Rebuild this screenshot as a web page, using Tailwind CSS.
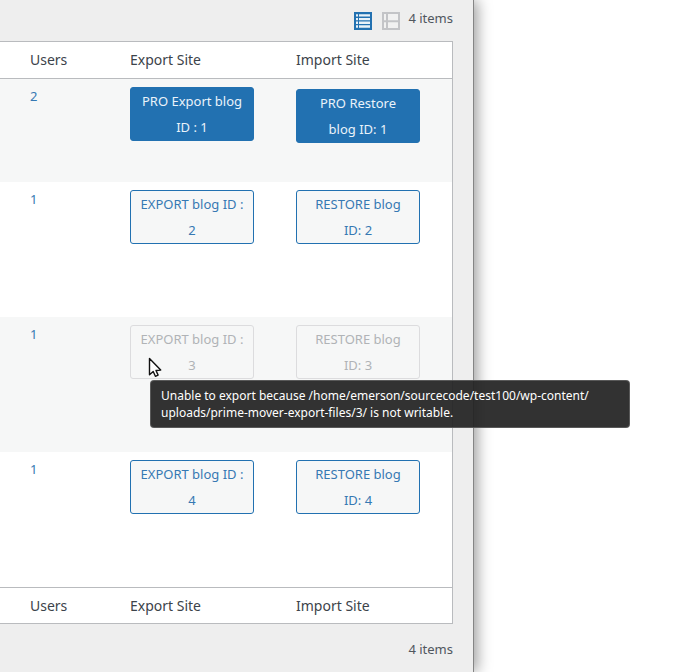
<!DOCTYPE html>
<html lang="en">
<head>
<meta charset="utf-8">
<meta name="viewport" content="width=device-width, initial-scale=1">
<title>Sites</title>
<script src="https://cdn.jsdelivr.net/npm/@tailwindcss/browser@4"></script>
</head>
<body class="flex min-h-screen bg-white pr-[213px] font-['Noto_Sans',sans-serif] text-[13px] text-[#50575e]">
<main class="min-w-0 flex-1 border-r border-[#858585] bg-[#eeeeee] pr-5 shadow-[3px_0_14px_rgba(0,0,0,0.4)]">
  <div class="flex h-[41px] justify-end">
    <div class="mt-3 flex gap-[10px]">
      <button type="button" aria-label="List view" class="h-[18px] w-[18px]">
        <svg class="block" width="18" height="18" viewBox="0 0 18 18"><path fill="#2271b1" d="M0 0h18v18H0z"/><path fill="#e9f2f8" d="M2 2.200h2v2.400H2zM5 2.200h11v2.400H5zM2 5.900h2v2.400H2zM5 5.900h11v2.400H5zM2 9.600h2v2.400H2zM5 9.600h11v2.400H5zM2 13.300h2v2.400H2zM5 13.300h11v2.400H5z"/></svg>
      </button>
      <button type="button" aria-label="Excerpt view" class="h-[18px] w-[18px]">
        <svg class="block" width="18" height="18" viewBox="0 0 18 18"><path fill="#c3c4c7" d="M0 0h18v18H0z"/><path fill="#f1f1f1" d="M2 2h2v6.300H2zM6 2h10v6.300H6zM2 10.300h2V16H2zM6 10.300h10V16H6z"/></svg>
      </button>
    </div>
    <span class="ml-2 mt-2 leading-5">4 items</span>
  </div>
  <table class="w-full border-separate border-spacing-0 border-y border-r border-[#b9bbbe] bg-white text-left">
    <thead class="text-sm text-[#3c434a]">
      <tr>
        <th scope="col" class="h-[37px] border-b border-[#b9bbbe] pl-[30px] font-normal">Users</th>
        <th scope="col" class="w-[166px] border-b border-[#b9bbbe] px-[10px] font-normal">Export Site</th>
        <th scope="col" class="w-[166px] border-b border-[#b9bbbe] px-[10px] font-normal">Import Site</th>
      </tr>
    </thead>
    <tbody class="align-top text-[#3679b3]">
      <tr class="h-[103px] bg-[#f6f7f7]">
        <td class="pl-[30px] pt-2 leading-[18px]"><a href="#">2</a></td>
        <td class="px-[10px] pt-2"><button type="button" class="block w-[124px] rounded-[3px] border border-[#2271b1] bg-[#2271b1] px-2 leading-[26px] text-[#eaf3fa]">PRO Export blog ID : 1</button></td>
        <td class="px-[10px] pt-[10px]"><button type="button" class="block w-[124px] rounded-[3px] border border-[#2271b1] bg-[#2271b1] px-2 leading-[26px] text-[#eaf3fa]">PRO Restore blog ID: 1</button></td>
      </tr>
      <tr class="h-[135px]">
        <td class="pl-[30px] pt-2 leading-[18px]"><a href="#">1</a></td>
        <td class="px-[10px] pt-2"><button type="button" class="block w-[124px] rounded-[3px] border border-[#2271b1] bg-[#f6f7f7] px-2 leading-[26px]">EXPORT blog ID : 2</button></td>
        <td class="px-[10px] pt-2"><button type="button" class="block w-[124px] rounded-[3px] border border-[#2271b1] bg-[#f6f7f7] px-2 leading-[26px]">RESTORE blog ID: 2</button></td>
      </tr>
      <tr class="h-[135px] bg-[#f6f7f7]">
        <td class="pl-[30px] pt-2 leading-[18px]"><a href="#">1</a></td>
        <td class="px-[10px] pt-2">
          <div class="relative w-[124px]">
            <button type="button" disabled aria-describedby="export-tip" class="block w-[124px] rounded-[3px] border border-[#dcdcde] bg-[#f6f7f7] px-2 leading-[26px] text-[#b0b3b6]">EXPORT blog ID : 3</button>
            <svg class="absolute left-[18px] top-8" width="14" height="22" viewBox="0 0 14 22"><path d="M1.500 1.500v16.300l3.700-3.300 2.200 4.800 2.700-1.200-2.100-4.600 4.700-.4z" fill="#fff" stroke="#111" stroke-width="1.400" stroke-linejoin="round"/></svg>
            <div id="export-tip" role="tooltip" class="absolute left-5 top-[55px] z-10 w-[480px] rounded-[4px] border border-[#747474]/60 bg-[#222]/93 px-[10px] py-[6px] text-xs leading-[17px] text-white">Unable to export because /home/emerson/sourcecode/test100/wp-content/<wbr>uploads/prime-mover-export-files/3/ is not writable.</div>
          </div>
        </td>
        <td class="px-[10px] pt-2"><button type="button" disabled class="block w-[124px] rounded-[3px] border border-[#dcdcde] bg-[#f6f7f7] px-2 leading-[26px] text-[#b0b3b6]">RESTORE blog ID: 3</button></td>
      </tr>
      <tr class="h-[135px]">
        <td class="pl-[30px] pt-2 leading-[18px]"><a href="#">1</a></td>
        <td class="px-[10px] pt-2"><button type="button" class="block w-[124px] rounded-[3px] border border-[#2271b1] bg-[#f6f7f7] px-2 leading-[26px]">EXPORT blog ID : 4</button></td>
        <td class="px-[10px] pt-2"><button type="button" class="block w-[124px] rounded-[3px] border border-[#2271b1] bg-[#f6f7f7] px-2 leading-[26px]">RESTORE blog ID: 4</button></td>
      </tr>
    </tbody>
    <tfoot class="text-sm text-[#3c434a]">
      <tr>
        <th scope="col" class="h-9 border-t border-[#b9bbbe] pl-[30px] font-normal">Users</th>
        <th scope="col" class="border-t border-[#b9bbbe] px-[10px] font-normal">Export Site</th>
        <th scope="col" class="border-t border-[#b9bbbe] px-[10px] font-normal">Import Site</th>
      </tr>
    </tfoot>
  </table>
  <div class="pt-[15px] text-right leading-5">4 items</div>
</main>
</body>
</html>
